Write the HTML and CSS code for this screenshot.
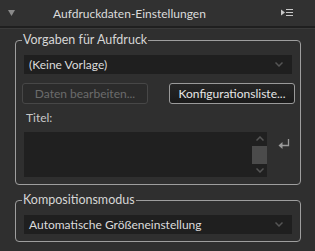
FILE: index.html
```html
<!DOCTYPE html>
<html lang="de">
<head>
    <meta charset="UTF-8">
    <title>Aufdruckdaten-Einstellungen</title>
    <link rel="stylesheet" href="styles.css">
</head>
<body>
    <div class="panel">
        <div class="panel-header">
            <svg class="collapse" width="7" height="6" viewBox="0 0 7 6"><path d="M0 0 H7 L3.5 6 Z" fill="#8a8a8a"/></svg>
            <span class="panel-title">Aufdruckdaten-Einstellungen</span>
            <svg class="menu-icon" width="12" height="8" viewBox="0 0 12 8">
                <path d="M0 0.5 L4 3.5 L0 6.5 Z" fill="#c8c8c8"/>
                <rect x="5" y="0" width="7" height="1" fill="#c8c8c8"/>
                <rect x="5" y="3" width="7" height="1" fill="#c8c8c8"/>
                <rect x="5" y="6" width="7" height="1" fill="#c8c8c8"/>
            </svg>
        </div>
        <div class="panel-body">
            <fieldset class="group">
                <legend>Vorgaben für Aufdruck</legend>
                <div class="select">
                    <span>(Keine Vorlage)</span>
                    <svg class="chevron" width="8" height="5" viewBox="0 0 8 5"><path d="M0.5 0.5 L4 4 L7.5 0.5" fill="none" stroke="#555" stroke-width="1.5"/></svg>
                </div>
                <div class="buttons">
                    <div class="btn disabled">Daten bearbeiten...</div>
                    <div class="btn">Konfigurationsliste...</div>
                </div>
                <div class="label">Titel:</div>
                <div class="title-row">
                    <div class="textarea">
                        <div class="scrollbar">
                            <svg width="8" height="5" viewBox="0 0 8 5"><path d="M0.5 4.5 L4 1 L7.5 4.5" fill="none" stroke="#555" stroke-width="1.5"/></svg>
                            <div class="thumb"></div>
                            <svg width="8" height="5" viewBox="0 0 8 5"><path d="M0.5 0.5 L4 4 L7.5 0.5" fill="none" stroke="#555" stroke-width="1.5"/></svg>
                        </div>
                    </div>
                    <svg class="enter" width="12" height="12" viewBox="0 0 12 12">
                        <path d="M10.5 0 V6.5 H3" fill="none" stroke="#9a9a9a" stroke-width="1.3"/>
                        <path d="M0.5 6.5 L4.5 3 V10 Z" fill="#9a9a9a"/>
                    </svg>
                </div>
            </fieldset>
            <fieldset class="group">
                <legend>Kompositionsmodus</legend>
                <div class="select">
                    <span>Automatische Größeneinstellung</span>
                    <svg class="chevron" width="8" height="5" viewBox="0 0 8 5"><path d="M0.5 0.5 L4 4 L7.5 0.5" fill="none" stroke="#555" stroke-width="1.5"/></svg>
                </div>
            </fieldset>
        </div>
    </div>
</body>
</html>
```

FILE: styles.css
```css
body {
    margin: 0;
    background: #2f2f2f;
    font-family: Lato, "Noto Sans", sans-serif;
    font-size: 12px;
    color: #d8d8d8;
}

.panel {
    width: 315px;
    height: 251px;
    overflow: hidden;
}

.panel-header {
    height: 26px;
    display: flex;
    align-items: center;
    padding: 0 22px 0 8px;
    background: #313131;
    border-bottom: 2px solid #1f1f1f;
    box-shadow: 0 1px 0 #3a3a3a;
}

.collapse {
    margin-right: 38px;
}

.panel-title {
    flex: 1;
    color: #dcdcdc;
    font-size: 12px;
}

.panel-body {
    padding: 4px 14px 0 15px;
}

.group {
    margin: 0 0 7px 0;
    padding: 0 5px 7px 6px;
    border: 1px solid #9e9e9e;
    border-radius: 4px;
}

.group legend {
    padding: 0 1px;
    margin-left: 0;
    color: #d6d6d6;
    line-height: 16px;
    font-size: 12.5px;
}

.select {
    display: flex;
    align-items: center;
    justify-content: space-between;
    height: 19px;
    margin: 7px 3px 0 2px;
    padding: 0 9px 0 5px;
    background: #1f1f1f;
    color: #dcdcdc;
    font-size: 12px;
}

.buttons {
    display: flex;
    justify-content: space-between;
    margin-top: 9px;
}

.btn {
    width: 124px;
    height: 19px;
    line-height: 19px;
    text-align: center;
    border: 1px solid #9a9a9a;
    border-radius: 3px;
    background: linear-gradient(#262626, #1a1a1a);
    color: #e6e6e6;
    font-size: 12px;
}

.btn.disabled {
    border-color: #474747;
    background: #2b2b2b;
    color: #6c6c6c;
}

.label {
    margin: 6px 0 0 4px;
    color: #c8c8c8;
    line-height: 16px;
    font-size: 12px;
}

.title-row {
    display: flex;
    align-items: flex-start;
    margin-top: 6px;
}

.textarea {
    width: 243px;
    height: 45px;
    margin-left: 2px;
    background: #202020;
    display: flex;
    justify-content: flex-end;
}

.scrollbar {
    width: 15px;
    display: flex;
    flex-direction: column;
    align-items: center;
    justify-content: space-between;
    padding: 4px 0;
    box-sizing: border-box;
}

.thumb {
    width: 15px;
    height: 18px;
    background: #4b4b4b;
}

.enter {
    margin: 7px 0 0 11px;
}
```
